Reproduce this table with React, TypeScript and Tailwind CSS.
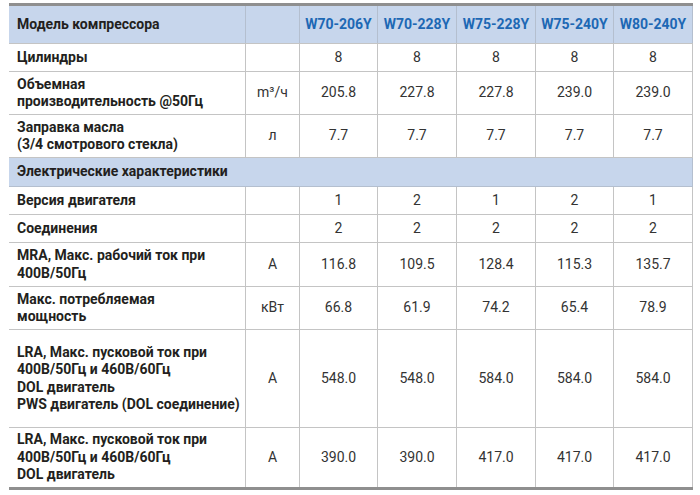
import React from 'react';

type Row = {
  label: string[];
  unit?: string;
  values: string[];
  h: string;
};

const models = ['W70-206Y', 'W70-228Y', 'W75-228Y', 'W75-240Y', 'W80-240Y'];

const topRows: Row[] = [
  { label: ['Цилиндры'], values: ['8', '8', '8', '8', '8'], h: 'h-[28px]' },
  {
    label: ['Объемная', 'производительность @50Гц'],
    unit: 'm³/ч',
    values: ['205.8', '227.8', '227.8', '239.0', '239.0'],
    h: 'h-[43px]',
  },
  {
    label: ['Заправка масла', '(3/4 смотрового стекла)'],
    unit: 'л',
    values: ['7.7', '7.7', '7.7', '7.7', '7.7'],
    h: 'h-[43px]',
  },
];

const electricRows: Row[] = [
  { label: ['Версия двигателя'], values: ['1', '2', '1', '2', '1'], h: 'h-[28px]' },
  { label: ['Соединения'], values: ['2', '2', '2', '2', '2'], h: 'h-[28px]' },
  {
    label: ['MRA, Макс. рабочий ток при', '400В/50Гц'],
    unit: 'A',
    values: ['116.8', '109.5', '128.4', '115.3', '135.7'],
    h: 'h-[44px]',
  },
  {
    label: ['Макс. потребляемая', 'мощность'],
    unit: 'кВт',
    values: ['66.8', '61.9', '74.2', '65.4', '78.9'],
    h: 'h-[43px]',
  },
  {
    label: ['LRA, Макс. пусковой ток при', '400В/50Гц и 460В/60Гц', 'DOL двигатель', 'PWS двигатель (DOL соединение)'],
    unit: 'A',
    values: ['548.0', '548.0', '584.0', '584.0', '584.0'],
    h: 'h-[98px]',
  },
  {
    label: ['LRA, Макс. пусковой ток при', '400В/50Гц и 460В/60Гц', 'DOL двигатель'],
    unit: 'A',
    values: ['390.0', '390.0', '417.0', '417.0', '417.0'],
    h: 'h-[59px]',
  },
];

const grid = 'grid grid-cols-[237px_54px_78px_79px_79px_78px_79px]';
const cell = 'flex items-center justify-center border-r border-[#c4c4c4]';

const DataRow = ({ row, last }: { row: Row; last?: boolean }) => (
  <div className={`${grid} ${row.h} ${last ? '' : 'border-b border-[#c4c4c4]'}`}>
    <div className="flex flex-col justify-center border-r border-[#c4c4c4] pl-2 font-bold text-[#231f20]">
      {row.label.map((line) => (
        <span key={line}>{line}</span>
      ))}
    </div>
    <div className={`${cell} text-[#333]`}>{row.unit ?? ''}</div>
    {row.values.map((v, i) => (
      <div key={i} className={`${cell} text-[#333]`}>
        {v}
      </div>
    ))}
  </div>
);

export default function App() {
  return (
    <div className="min-h-screen bg-white pt-[3px] pl-[9px]" style={{ fontFamily: 'Roboto, "Noto Sans", sans-serif' }}>
      <div className="w-[684px] border-t-[3px] border-b-[3px] border-[#8f8f8f] text-[14px] leading-[17.5px]">
        {/* Header */}
        <div className={`${grid} h-[38px] border-b border-[#c4c4c4] bg-[#c7d6ec]`}>
          <div className="flex items-center border-r border-[#b4bfcf] pl-2 font-bold text-[#231f20]">
            Модель компрессора
          </div>
          <div className="border-r border-[#b4bfcf]" />
          {models.map((m) => (
            <div key={m} className="flex items-center justify-center border-r border-[#b4bfcf] font-bold text-[#1d68b4]">
              {m}
            </div>
          ))}
        </div>

        {topRows.map((r) => (
          <DataRow key={r.label[0]} row={r} />
        ))}

        {/* Section band */}
        <div className="flex h-[29px] items-center border-r border-b border-[#b4bfcf] bg-[#c7d6ec] pl-2 font-bold text-[#231f20]">
          Электрические характеристики
        </div>

        {electricRows.map((r, i) => (
          <DataRow key={i} row={r} last={i === electricRows.length - 1} />
        ))}
      </div>
    </div>
  );
}
